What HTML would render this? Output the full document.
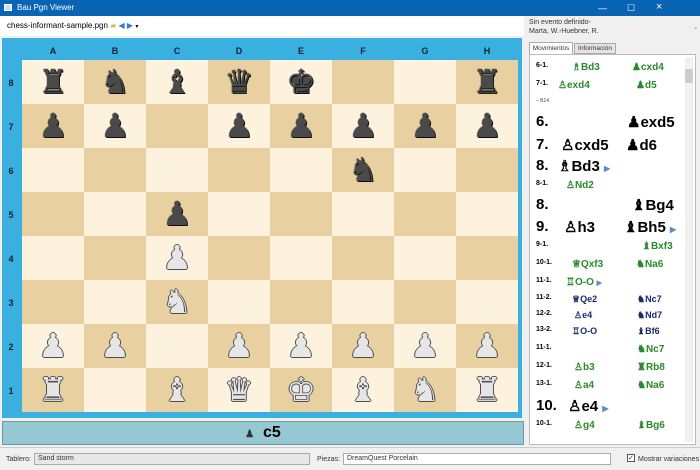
<!DOCTYPE html>
<html><head><meta charset="utf-8"><style>
*{margin:0;padding:0;box-sizing:border-box}
body{width:700px;height:470px;overflow:hidden;background:#f0f0f0;font-family:"Liberation Sans",sans-serif;position:relative}
.title{position:absolute;left:0;top:0;width:700px;height:16px;background:#0a64b4;color:#fff;font-size:8px;line-height:16px;padding-left:17px}
.title .ic{position:absolute;left:4px;top:4px;width:8px;height:7px;background:#cfe0f0;border:1px solid #fff}
.title .b{position:absolute;top:0;font-size:9px}
.tool{position:absolute;left:0;top:16px;width:524px;height:20px;background:#fff;font-size:8px;line-height:20px;padding-left:7px;color:#000}
.frame{position:absolute;left:2px;top:38px;width:520px;height:380px;background:#3ab0e0}
.lbl{position:absolute;font-size:9px;font-weight:bold;color:#123;text-align:center}
.sq{position:absolute;width:62px;height:44px;text-align:center;line-height:44px;font-family:"DejaVu Sans",sans-serif;font-size:33px}
.bk{color:#4a4a4a;text-shadow:0 0 1px #000,1px 1px 0 #111}
.wh{color:#e6e6e6;text-shadow:0 0 1px #333,-1px 0 0 #555,1px 0 0 #555,0 1px 0 #555,0 -1px 0 #666}
.status{position:absolute;left:2px;top:421px;width:522px;height:24px;background:#96c8d4;border:1px solid #6a9aa8;text-align:center;font-size:16px;font-weight:bold;line-height:22px}
.bot{position:absolute;left:0;top:447px;width:700px;height:23px;background:#f0f0f0;border-top:1px solid #ccc;font-size:7px;color:#333}
.combo{position:absolute;top:5px;height:12px;background:#e8e8e8;border:1px solid #aaa;font-size:7px;line-height:10px;padding-left:3px}
.rp{position:absolute;left:527px;top:16px;width:173px;height:431px;background:#f0f0f0}
.list{position:absolute;left:529px;top:54px;width:167px;height:391px;background:#fff;border:1px solid #bbb;overflow:hidden}
.row{position:absolute;left:6px;white-space:nowrap;font-weight:bold}
.g{color:#2a8a2a}.n{color:#1a2a6a}
</style></head><body>
<div class="title"><div class="ic"></div>Bau Pgn Viewer<span class="b" style="left:598px">—</span><span class="b" style="left:627px">☐</span><span class="b" style="left:656px;top:-1px;font-size:11px">×</span></div>
<div class="tool">chess-informant-sample.pgn <span style="color:#e6b43c">▰</span> <span style="color:#3a7ad0">◀ ▶</span> <span style="font-size:6px">▾</span></div>
<div class="frame"></div>
<div id="board"></div>
<div class="status"><span style="font-size:10px;color:#333">♟</span>&nbsp; c5</div>
<div class="rp">
<div style="position:absolute;left:2px;top:2px;font-size:7px;color:#333;line-height:9px">Sin evento definido-<br>Marta, W.-Huebner, R.</div>
<div style="position:absolute;left:166px;top:8px;font-size:6px;color:#777">⌄</div>
<div style="position:absolute;left:2px;top:26px;width:44px;height:12px;background:#fff;border:1px solid #aaa;border-bottom:none;font-size:6.5px;line-height:11px;text-align:center;color:#333">Movimientos</div>
<div style="position:absolute;left:47px;top:27px;width:42px;height:11px;background:#e4e4e4;border:1px solid #aaa;font-size:6.5px;line-height:10px;text-align:center;color:#333">Información</div>
</div>
<div class="list">
<div style="position:absolute;right:2px;top:2px;width:8px;height:385px;background:#f0f0f0"></div>
<div style="position:absolute;right:2px;top:14px;width:8px;height:14px;background:#cdcdcd"></div>
<div class="row" style="top:7px;font-size:7px">6-1.<span style="position:absolute;left:36px;font-size:10px" class="g">♗Bd3</span><span style="position:absolute;left:96px;font-size:10px" class="g">♟cxd4</span></div>
<div class="row" style="top:25px;font-size:7px">7-1.<span style="position:absolute;left:22px;font-size:10px" class="g">♙exd4</span><span style="position:absolute;left:100px;font-size:10px" class="g">♟d5</span></div>
<div class="row" style="top:43px;font-size:5px;color:#444;font-weight:normal">– B14</div>
<div class="row" style="top:58px;font-size:15px">6.<span style="position:absolute;left:91px">♟exd5</span></div>
<div class="row" style="top:81px;font-size:15px">7.<span style="position:absolute;left:25px">♙cxd5</span><span style="position:absolute;left:90px">♟d6</span></div>
<div class="row" style="top:102px;font-size:15px">8.<span style="position:absolute;left:22px">♗Bd3 <span style="color:#5a8ad0;font-size:8px">▶</span></span></div>
<div class="row" style="top:125px;font-size:7px">8-1.<span style="position:absolute;left:30px;font-size:10px" class="g">♙Nd2</span></div>
<div class="row" style="top:141px;font-size:15px">8.<span style="position:absolute;left:96px">♝Bg4</span></div>
<div class="row" style="top:163px;font-size:15px">9.<span style="position:absolute;left:28px">♙h3</span><span style="position:absolute;left:88px">♝Bh5 <span style="color:#5a8ad0;font-size:8px">▶</span></span></div>
<div class="row" style="top:186px;font-size:7px">9-1.<span style="position:absolute;left:106px;font-size:10px" class="g">♝Bxf3</span></div>
<div class="row" style="top:204px;font-size:7px">10-1.<span style="position:absolute;left:36px;font-size:10px" class="g">♕Qxf3</span><span style="position:absolute;left:100px;font-size:10px" class="g">♞Na6</span></div>
<div class="row" style="top:222px;font-size:7px">11-1.<span style="position:absolute;left:30px;font-size:10px" class="g">♖O-O <span style="color:#5a8ad0;font-size:7px">▶</span></span></div>
<div class="row" style="top:239px;font-size:7px">11-2.<span style="position:absolute;left:36px;font-size:9px" class="n">♕Qe2</span><span style="position:absolute;left:101px;font-size:9px" class="n">♞Nc7</span></div>
<div class="row" style="top:255px;font-size:7px">12-2.<span style="position:absolute;left:38px;font-size:9px" class="n">♙e4</span><span style="position:absolute;left:101px;font-size:9px" class="n">♞Nd7</span></div>
<div class="row" style="top:271px;font-size:7px">13-2.<span style="position:absolute;left:36px;font-size:9px" class="n">♖O-O</span><span style="position:absolute;left:101px;font-size:9px" class="n">♝Bf6</span></div>
<div class="row" style="top:289px;font-size:7px">11-1.<span style="position:absolute;left:101px;font-size:10px" class="g">♞Nc7</span></div>
<div class="row" style="top:307px;font-size:7px">12-1.<span style="position:absolute;left:38px;font-size:10px" class="g">♙b3</span><span style="position:absolute;left:101px;font-size:10px" class="g">♜Rb8</span></div>
<div class="row" style="top:325px;font-size:7px">13-1.<span style="position:absolute;left:38px;font-size:10px" class="g">♙a4</span><span style="position:absolute;left:101px;font-size:10px" class="g">♞Na6</span></div>
<div class="row" style="top:342px;font-size:15px">10.<span style="position:absolute;left:32px">♙e4 <span style="color:#5a8ad0;font-size:8px">▶</span></span></div>
<div class="row" style="top:365px;font-size:7px">10-1.<span style="position:absolute;left:38px;font-size:10px" class="g">♙g4</span><span style="position:absolute;left:101px;font-size:10px" class="g">♝Bg6</span></div>
</div>
<div class="bot">
<span style="position:absolute;left:6px;top:8px">Tablero:</span>
<div class="combo" style="left:34px;width:276px">Sand storm</div>
<span style="position:absolute;left:317px;top:8px">Piezas:</span>
<div class="combo" style="left:343px;width:268px;background:#fff">DreamQuest Porcelain</div>
<span style="position:absolute;left:627px;top:6px;width:8px;height:8px;border:1px solid #555;background:#fff;font-size:7px;line-height:7px">✓</span>
<span style="position:absolute;left:638px;top:8px">Mostrar variaciones</span>
</div>
<script>
var b=document.getElementById('board'),h='';
var files='ABCDEFGH';
for(var i=0;i<8;i++){h+='<div class="lbl" style="left:'+(22+i*62)+'px;top:46px;width:62px">'+files[i]+'</div>';
h+='<div class="lbl" style="left:6px;top:'+(78+i*44)+'px;width:10px">'+(8-i)+'</div>';}
var pos=['rnbqk--r','pp-ppppp','-----n--','--p-----','--P-----','--N-----','PP-PPPPP','R-BQKBNR'];
var map={k:'♚',q:'♛',r:'♜',b:'♝',n:'♞',p:'♟'};
for(var r=0;r<8;r++)for(var c=0;c<8;c++){var light=(r+c)%2==0;var p=pos[r][c];var g='';
if(p!='-'){var low=p.toLowerCase();g='<span class="'+(p==low?'bk':'wh')+'">'+map[low]+'</span>';}
h+='<div class="sq" style="left:'+(22+c*62)+'px;top:'+(60+r*44)+'px;background:'+(light?'#fdf2de':'#e8d0a0')+'">'+g+'</div>';}
b.innerHTML=h;
</script>
</body></html>
